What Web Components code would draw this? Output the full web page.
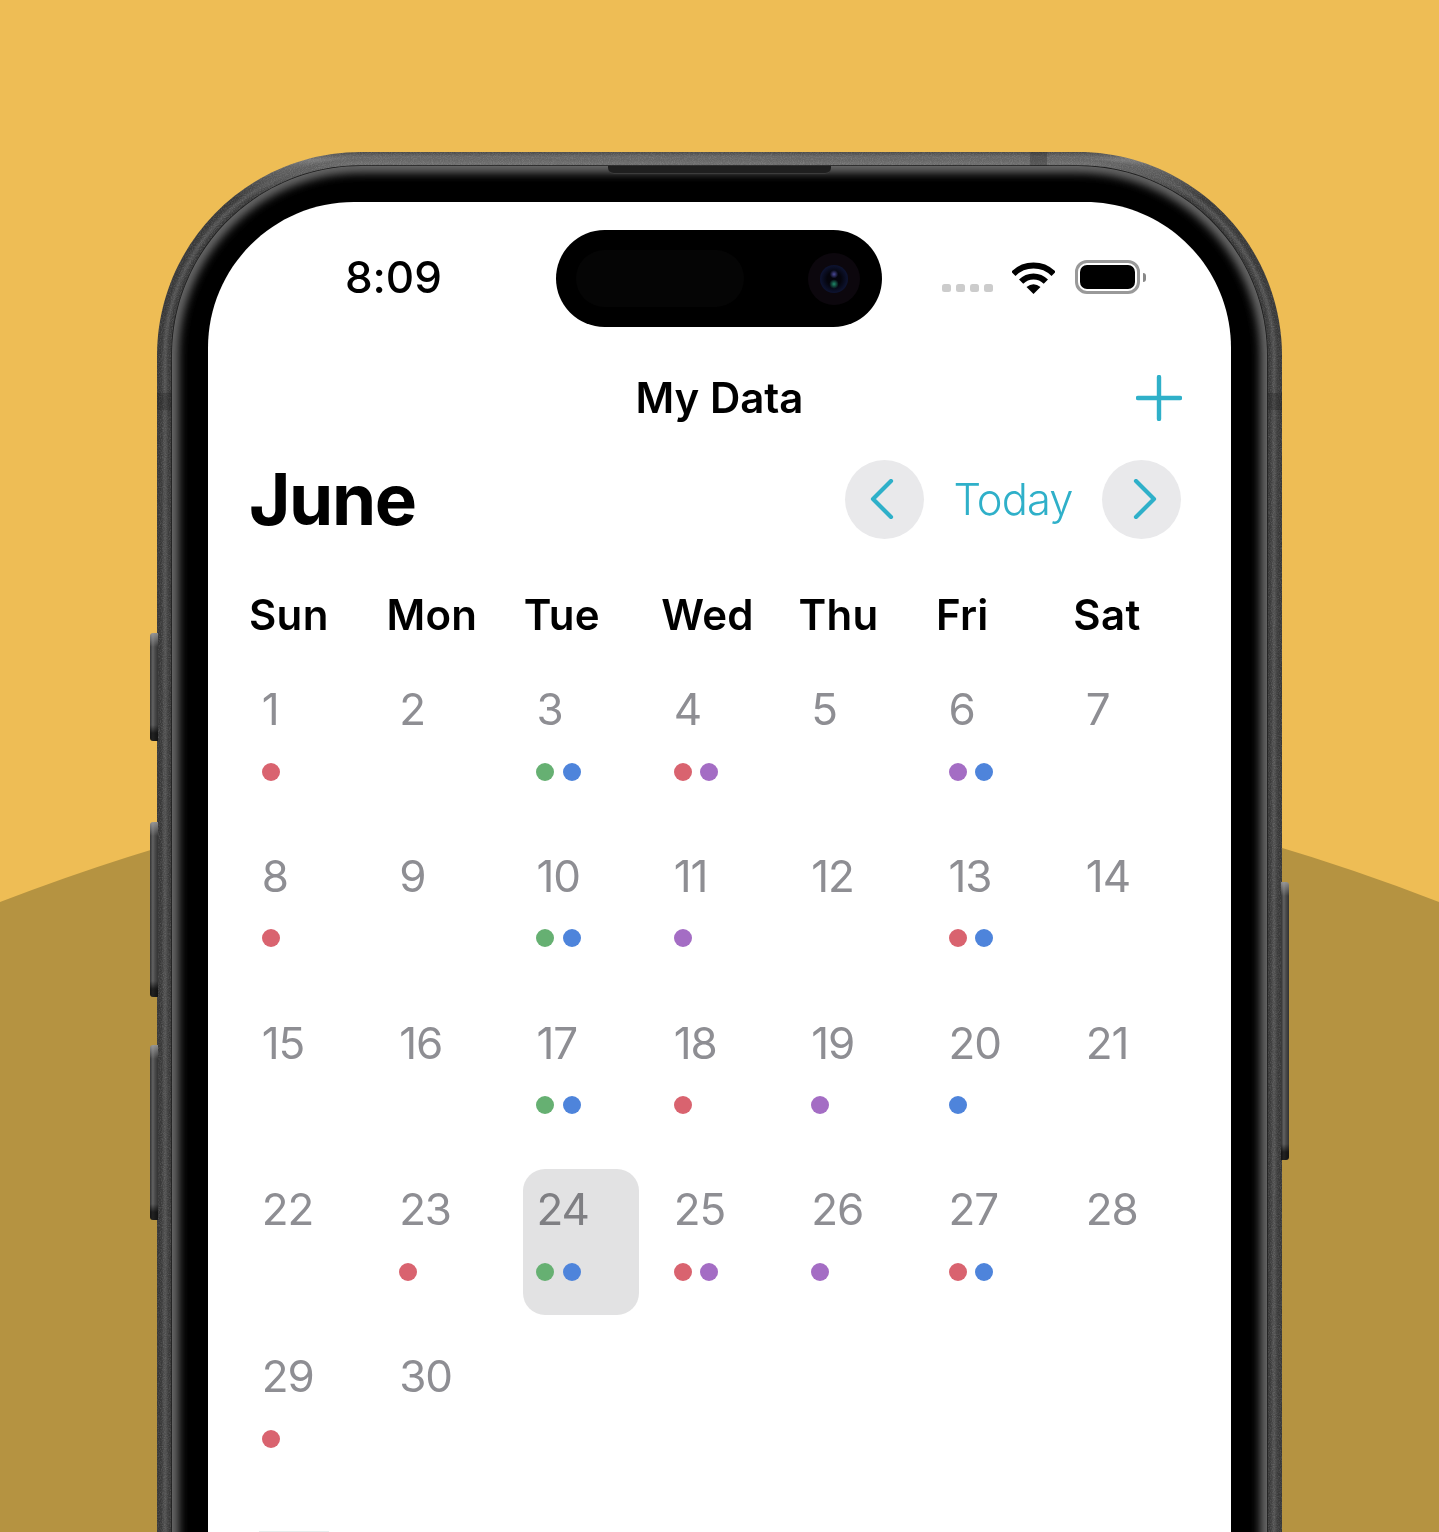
<!DOCTYPE html>
<html lang="en">
<head>
<meta charset="utf-8">
<title>My Data</title>
<style>
    html, body { margin: 0; padding: 0; height: 1532px; overflow: hidden; background: #EEBD55; }
    body { font-family: Inter, "Liberation Sans", sans-serif; }
</style>
</head>
<body>
<phone-scene>
    <phone-frame>
        <status-bar time="8:09"></status-bar>
        <nav-bar title="My Data"></nav-bar>
        <month-header month="June"></month-header>
        <week-days></week-days>
        <calendar-grid>
            <cal-day num="1" dots="r"></cal-day>
            <cal-day num="2"></cal-day>
            <cal-day num="3" dots="g b"></cal-day>
            <cal-day num="4" dots="r p"></cal-day>
            <cal-day num="5"></cal-day>
            <cal-day num="6" dots="p b"></cal-day>
            <cal-day num="7"></cal-day>
            <cal-day num="8" dots="r"></cal-day>
            <cal-day num="9"></cal-day>
            <cal-day num="10" dots="g b"></cal-day>
            <cal-day num="11" dots="p"></cal-day>
            <cal-day num="12"></cal-day>
            <cal-day num="13" dots="r b"></cal-day>
            <cal-day num="14"></cal-day>
            <cal-day num="15"></cal-day>
            <cal-day num="16"></cal-day>
            <cal-day num="17" dots="g b"></cal-day>
            <cal-day num="18" dots="r"></cal-day>
            <cal-day num="19" dots="p"></cal-day>
            <cal-day num="20" dots="b"></cal-day>
            <cal-day num="21"></cal-day>
            <cal-day num="22"></cal-day>
            <cal-day num="23" dots="r"></cal-day>
            <cal-day num="24" dots="g b" selected></cal-day>
            <cal-day num="25" dots="r p"></cal-day>
            <cal-day num="26" dots="p"></cal-day>
            <cal-day num="27" dots="r b"></cal-day>
            <cal-day num="28"></cal-day>
            <cal-day num="29" dots="r"></cal-day>
            <cal-day num="30"></cal-day>
        </calendar-grid>
    </phone-frame>
</phone-scene>

<script>
// rounded box as a path, so the frame layers and the screen clip share one shape
function roundedPath(x, y, w, h, r) {
    const c = r * 0.4477;
    const right = x + w;
    const b = y + h;
    return `M${x + r} ${y} H${right - r} C${right - c} ${y} ${right} ${y + c} ${right} ${y + r} ` +
        `V${b - r} C${right} ${b - c} ${right - c} ${b} ${right - r} ${b} ` +
        `H${x + r} C${x + c} ${b} ${x} ${b - c} ${x} ${b - r} ` +
        `V${y + r} C${x} ${y + c} ${x + c} ${y} ${x + r} ${y} Z`;
}

class PhoneScene extends HTMLElement {
    constructor() {
        super();
        this.attachShadow({ mode: 'open' });
        this.shadowRoot.innerHTML = `
            <style>
                :host {
                    display: flex;
                    justify-content: center;
                    position: relative;
                    height: 1532px;
                    padding-top: 152px;
                    box-sizing: border-box;
                    overflow: hidden;
                    background: #EEBD55;
                }
                svg { position: absolute; left: 0; top: 0; }
            </style>
            <svg width="1439" height="1532" viewBox="0 0 1439 1532">
                <path d="M0 902 Q719.5 624 1439 902 V1532 H0 Z" fill="#B59341"/>
            </svg>
            <slot></slot>
        `;
    }
}

class PhoneFrame extends HTMLElement {
    constructor() {
        super();
        this.attachShadow({ mode: 'open' });
        const outer = roundedPath(0, 0, 1125, 1600, 204);
        const mid = roundedPath(8, 8, 1109, 1584, 196);
        const inner = roundedPath(15, 14, 1095, 1572, 189);
        const screen = roundedPath(0, 0, 1023, 1500, 146);
        this.shadowRoot.innerHTML = `
            <style>
                :host {
                    display: block;
                    position: relative;
                    width: 1125px;
                    height: 1600px;
                    box-sizing: border-box;
                    padding: 50px 51px;
                    flex: none;
                }
                .body { position: absolute; left: 0; top: 0; }
                .screen {
                    position: relative;
                    height: 1500px;
                    background: #fff;
                    overflow: hidden;
                    color: #000;
                    clip-path: path('${screen}');
                    will-change: transform;
                }
                .btn {
                    position: absolute;
                    width: 8px;
                    background:
                        linear-gradient(rgba(170,170,170,.75), transparent 14px, transparent calc(100% - 16px), rgba(0,0,0,.65) calc(100% - 8px)),
                        linear-gradient(90deg, #333, #626262 35%, #4c4c4c 60%, #333);
                }
                .btn.l { left: -7px; border-radius: 3px 0 0 3px; }
                .btn.r { right: -7px; border-radius: 0 3px 3px 0; }
                .speaker {
                    position: absolute;
                    left: 451px;
                    top: 14px;
                    width: 223px;
                    height: 8px;
                    border-radius: 0 0 6px 6px;
                    background: #1f1f1f;
                    border-bottom: 1px solid #3c3c3c;
                    box-sizing: border-box;
                }
                .antenna { position: absolute; background: rgba(30,30,30,.28); }
            </style>
            <svg class="body" width="1125" height="1600">
                <defs>
                    <linearGradient id="metal" x1="0" y1="0" x2="0" y2="1">
                        <stop offset="0" stop-color="#4a4a4a"/>
                        <stop offset="0.005" stop-color="#787878"/>
                        <stop offset="0.009" stop-color="#646464"/>
                        <stop offset="0.03" stop-color="#383838"/>
                        <stop offset="1" stop-color="#383838"/>
                    </linearGradient>
                    <filter id="grain" x="0" y="0" width="100%" height="100%">
                        <feTurbulence type="fractalNoise" baseFrequency="0.9" numOctaves="2" seed="4"/>
                        <feColorMatrix values="0 0 0 0 1  0 0 0 0 1  0 0 0 0 1  1.3 0 0 0 -0.5"/>
                        <feComposite in2="SourceAlpha" operator="in"/>
                    </filter>
                    <filter id="soft" x="-5%" y="-5%" width="110%" height="110%">
                        <feGaussianBlur stdDeviation="5"/>
                    </filter>
                    <filter id="soft2" x="-5%" y="-5%" width="110%" height="110%">
                        <feGaussianBlur stdDeviation="1.5"/>
                    </filter>
                    <clipPath id="inside"><path d="${inner}"/></clipPath>
                </defs>
                <path d="${outer}" fill="url(#metal)"/>
                <path d="${mid}" fill="none" stroke="#5c5c5c" stroke-width="3" filter="url(#soft2)"/>
                <path d="${outer} ${inner}" fill-rule="evenodd" fill="#fff" filter="url(#grain)" opacity=".22"/>
                <path d="${inner}" fill="#000" stroke="#1c1c1c" stroke-width="1.5"/>
                <g clip-path="url(#inside)">
                    <path d="${inner}" fill="none" stroke="#6e6e6e" stroke-width="13" filter="url(#soft)"/>
                </g>
            </svg>
            <div class="speaker"></div>
            <div class="antenna" style="left:873px;top:0;width:17px;height:14px"></div>
            <div class="antenna" style="left:0;top:241px;width:15px;height:17px"></div>
            <div class="antenna" style="right:0;top:241px;width:15px;height:17px"></div>
            <div class="btn l" style="top:481px;height:108px"></div>
            <div class="btn l" style="top:670px;height:175px"></div>
            <div class="btn l" style="top:893px;height:175px"></div>
            <div class="btn r" style="top:730px;height:278px"></div>
            <div class="screen"><slot></slot></div>
        `;
    }
}

class StatusBar extends HTMLElement {
    constructor() {
        super();
        this.attachShadow({ mode: 'open' });
    }

    connectedCallback() {
        this.shadowRoot.innerHTML = `
            <style>
                :host {
                    display: grid;
                    grid-template-columns: 348px 326px 1fr;
                    height: 125px;
                    box-sizing: border-box;
                    padding-top: 28px;
                }
                .time {
                    font-size: 44px;
                    font-weight: 520;
                    line-height: 95px;
                    padding-left: 137px;
                    letter-spacing: -.1px;
                }
                .island {
                    position: relative;
                    height: 97px;
                    border-radius: 49px;
                    background: #000;
                    display: flex;
                    align-items: center;
                    justify-content: space-between;
                    padding: 0 22px 0 20px;
                    box-sizing: border-box;
                }
                .sensor { width: 168px; height: 57px; border-radius: 29px; background: #050505; }
                .camera {
                    width: 52px;
                    height: 52px;
                    border-radius: 50%;
                    background: #0c070d;
                    display: grid;
                    place-items: center;
                }
                .lens {
                    width: 28px;
                    height: 28px;
                    border-radius: 50%;
                    background:
                        radial-gradient(circle at 50% 33%, #4a4a9a 0, transparent 18%),
                        radial-gradient(circle at 50% 68%, #1f8a6a 0, transparent 20%),
                        radial-gradient(circle, #04040c 35%, #10183c 80%);
                }
                .icons { position: relative; display: flex; align-items: center; padding-left: 60px; height: 97px; }
                .dots { display: flex; gap: 5.5px; margin-top: 19px; margin-right: 19px; }
                .dots i { width: 8.5px; height: 8.5px; border-radius: 2.5px; background: #ccc; }
                .wifi { margin-right: 20px; margin-top: -2px; }
                .battery {
                    width: 65px;
                    height: 34px;
                    box-sizing: border-box;
                    border: 3px solid #999;
                    border-radius: 12px;
                    padding: 2px;
                    margin-top: -3px;
                }
                .battery b { display: block; height: 100%; border-radius: 7px; background: #000; }
                .cap { width: 3px; height: 9px; margin: -3px 0 0 3px; background: #888; border-radius: 0 3px 3px 0; }
            </style>
            <div class="time">${this.getAttribute('time')}</div>
            <div class="island">
                <div class="sensor"></div>
                <div class="camera"><div class="lens"></div></div>
            </div>
            <div class="icons">
                <div class="dots"><i></i><i></i><i></i><i></i></div>
                <svg class="wifi" width="43" height="32" viewBox="0 0 43 32">
                    <path d="M1.35 11.85 A28.5 28.5 0 0 1 41.65 11.85" fill="none" stroke="#000" stroke-width="6"/>
                    <path d="M9.13 19.63 A17.5 17.5 0 0 1 33.87 19.63" fill="none" stroke="#000" stroke-width="6"/>
                    <path d="M21.5 32 L14.5 25 Q21.5 19.5 28.5 25 Z" fill="#000"/>
                </svg>
                <div class="battery"><b></b></div>
                <div class="cap"></div>
            </div>
        `;
    }
}

class NavBar extends HTMLElement {
    constructor() {
        super();
        this.attachShadow({ mode: 'open' });
    }

    connectedCallback() {
        this.shadowRoot.innerHTML = `
            <style>
                :host {
                    display: grid;
                    grid-template-columns: 1fr auto 1fr;
                    align-items: center;
                    height: 60px;
                    margin-top: 41px;
                    padding: 0 49px;
                }
                h1 { margin: 0; font-size: 42px; font-weight: 600; line-height: 60px; letter-spacing: 0; }
                svg { justify-self: end; display: block; }
            </style>
            <span></span>
            <h1>${this.getAttribute('title')}</h1>
            <svg width="46" height="46" viewBox="0 0 46 46">
                <path d="M23 2 V44 M2 23 H44" stroke="#2FB0C9" stroke-width="4.4" stroke-linecap="round" fill="none"/>
            </svg>
        `;
    }
}

class MonthHeader extends HTMLElement {
    constructor() {
        super();
        this.attachShadow({ mode: 'open' });
    }

    connectedCallback() {
        this.shadowRoot.innerHTML = `
            <style>
                :host {
                    display: flex;
                    align-items: center;
                    height: 80px;
                    margin-top: 31px;
                    padding: 0 50px 0 41px;
                }
                h2 { margin: 0; flex: 1; font-size: 71px; font-weight: 700; line-height: 80px; letter-spacing: -1.4px; }
                button {
                    width: 79px;
                    height: 79px;
                    border: 0;
                    padding: 0;
                    border-radius: 50%;
                    background: #E9E9EB;
                    display: grid;
                    place-items: center;
                }
                .today {
                    width: 178px;
                    text-align: center;
                    color: #2FB0C9;
                    font-size: 43.5px;
                    font-weight: 360;
                    line-height: 80px;
                    letter-spacing: -.9px;
                }
                path { fill: none; stroke: #2FB0C9; stroke-width: 4.2; stroke-linecap: round; stroke-linejoin: round; }
            </style>
            <h2>${this.getAttribute('month')}</h2>
            <button aria-label="Previous">
                <svg width="24" height="40" viewBox="0 0 24 40" style="margin-right:6px"><path d="M21 2 L3 20 L21 38"/></svg>
            </button>
            <div class="today">Today</div>
            <button aria-label="Next">
                <svg width="24" height="40" viewBox="0 0 24 40" style="margin-left:6px"><path d="M3 2 L21 20 L3 38"/></svg>
            </button>
        `;
    }
}

class WeekDays extends HTMLElement {
    constructor() {
        super();
        this.attachShadow({ mode: 'open' });
        const names = ['Sun', 'Mon', 'Tue', 'Wed', 'Thu', 'Fri', 'Sat'];
        this.shadowRoot.innerHTML = `
            <style>
                :host {
                    display: grid;
                    grid-template-columns: repeat(7, 137.4px);
                    margin: 46px 0 0 41px;
                    font-size: 42px;
                    font-weight: 600;
                    line-height: 60px;
                    letter-spacing: .3px;
                }
            </style>
            ${names.map(n => `<div>${n}</div>`).join('')}
        `;
    }
}

class CalendarGrid extends HTMLElement {
    constructor() {
        super();
        this.attachShadow({ mode: 'open' });
        this.shadowRoot.innerHTML = `
            <style>
                :host {
                    display: grid;
                    grid-template-columns: repeat(7, 116px);
                    grid-auto-rows: 146px;
                    column-gap: 21.35px;
                    row-gap: 20.75px;
                    margin: 23.75px 0 0 40.2px;
                }
                .rule {
                    grid-column: 1;
                    align-self: start;
                    width: 70px;
                    height: 2px;
                    margin: 28px 0 0 11px;
                    background: #E6EDED;
                }
            </style>
            <slot></slot>
            <div class="rule"></div>
        `;
    }
}

class CalDay extends HTMLElement {
    constructor() {
        super();
        this.attachShadow({ mode: 'open' });
    }

    getDotColor(code) {
        if (code === 'r') return '#D9636F'; // Red
        if (code === 'g') return '#66B072'; // Green
        if (code === 'b') return '#4E84DB'; // Blue
        return '#A46DC4'; // Purple
    }

    connectedCallback() {
        const codes = (this.getAttribute('dots') || '').split(' ').filter(Boolean);
        this.shadowRoot.innerHTML = `
            <style>
                :host {
                    display: block;
                    box-sizing: border-box;
                    padding: 13.25px 0 0 13.6px;
                    border-radius: 22px;
                }
                :host([selected]) { background: #E2E2E3; }
                .num {
                    font-size: 44px;
                    font-weight: 400;
                    line-height: 54px;
                    color: #8E8E93;
                    letter-spacing: -1.1px;
                }
                :host([selected]) .num { color: #7F7F83; }
                .dots { display: flex; gap: 8.3px; margin-top: 26.7px; }
                .dots i { width: 18px; height: 18px; border-radius: 50%; }
            </style>
            <div class="num">${this.getAttribute('num')}</div>
            <div class="dots">${codes.map(c => `<i style="background:${this.getDotColor(c)}"></i>`).join('')}</div>
        `;
    }
}

customElements.define('phone-scene', PhoneScene);
customElements.define('phone-frame', PhoneFrame);
customElements.define('status-bar', StatusBar);
customElements.define('nav-bar', NavBar);
customElements.define('month-header', MonthHeader);
customElements.define('week-days', WeekDays);
customElements.define('calendar-grid', CalendarGrid);
customElements.define('cal-day', CalDay);
</script>
</body>
</html>
